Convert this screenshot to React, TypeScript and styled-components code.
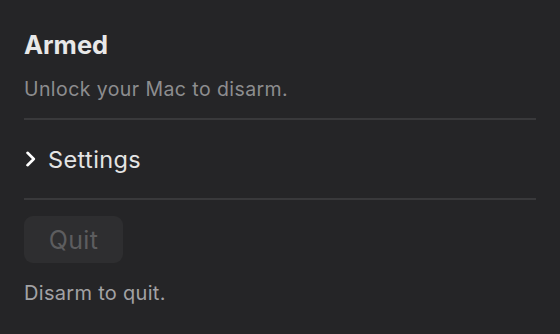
import React from "react";
import styled, { createGlobalStyle } from "styled-components";

const Global = createGlobalStyle`
  html, body { margin: 0; padding: 0; background: #252527; }
  body { font-family: Inter, "Noto Sans", sans-serif; -webkit-font-smoothing: antialiased; }
`;

const Panel = styled.div`
  width: 560px;
  height: 334px;
  box-sizing: border-box;
  padding: 30px 24px 0 24px;
  background: #252527;
  display: flex;
  flex-direction: column;
`;

const Title = styled.h1`
  margin: 0;
  font-size: 25.5px;
  line-height: 30px;
  font-weight: 700;
  color: #e8e8e8;
`;

const Subtitle = styled.p`
  margin: 17px 0 0 0;
  font-size: 19.5px;
  line-height: 24px;
  color: #8d8d8f;
  letter-spacing: 0.42px;
`;

const Divider = styled.hr`
  margin: 0;
  border: none;
  height: 2px;
  background: #39393b;
`;

const Section = styled.div<{ $pad: string }>`
  padding: ${(p) => p.$pad};
`;

const Disclosure = styled.div`
  display: flex;
  align-items: center;
  gap: 12px;
  height: 78px;
  color: #e4e4e4;
  font-size: 23.5px;
  letter-spacing: 0.4px;
`;

const QuitButton = styled.button`
  width: 99px;
  height: 47px;
  border: none;
  border-radius: 9px;
  background: #2e2e30;
  color: #5d5d5f;
  font-family: inherit;
  font-size: 25px;
  letter-spacing: 0.4px;
  padding: 0;
`;

const Note = styled.p`
  margin: 18px 0 0 0;
  font-size: 20px;
  line-height: 24px;
  color: #a2a2a4;
  letter-spacing: 0.3px;
`;

const Chevron = () => (
  <svg width="12" height="16" viewBox="0 0 12 16" fill="none">
    <path d="M3.5 1.8 L9.8 8 L3.5 14.2" stroke="#ffffff" strokeWidth="2.6" strokeLinecap="round" strokeLinejoin="round" />
  </svg>
);

export default function App() {
  return (
    <>
      <Global />
      <Panel>
        <Title>Armed</Title>
        <Subtitle>Unlock your Mac to disarm.</Subtitle>
        <Section $pad="17px 0 0 0">
          <Divider />
        </Section>
        <Disclosure>
          <Chevron />
          <span>Settings</span>
        </Disclosure>
        <Divider />
        <Section $pad="16px 0 0 0">
          <QuitButton disabled>Quit</QuitButton>
        </Section>
        <Note>Disarm to quit.</Note>
      </Panel>
    </>
  );
}
